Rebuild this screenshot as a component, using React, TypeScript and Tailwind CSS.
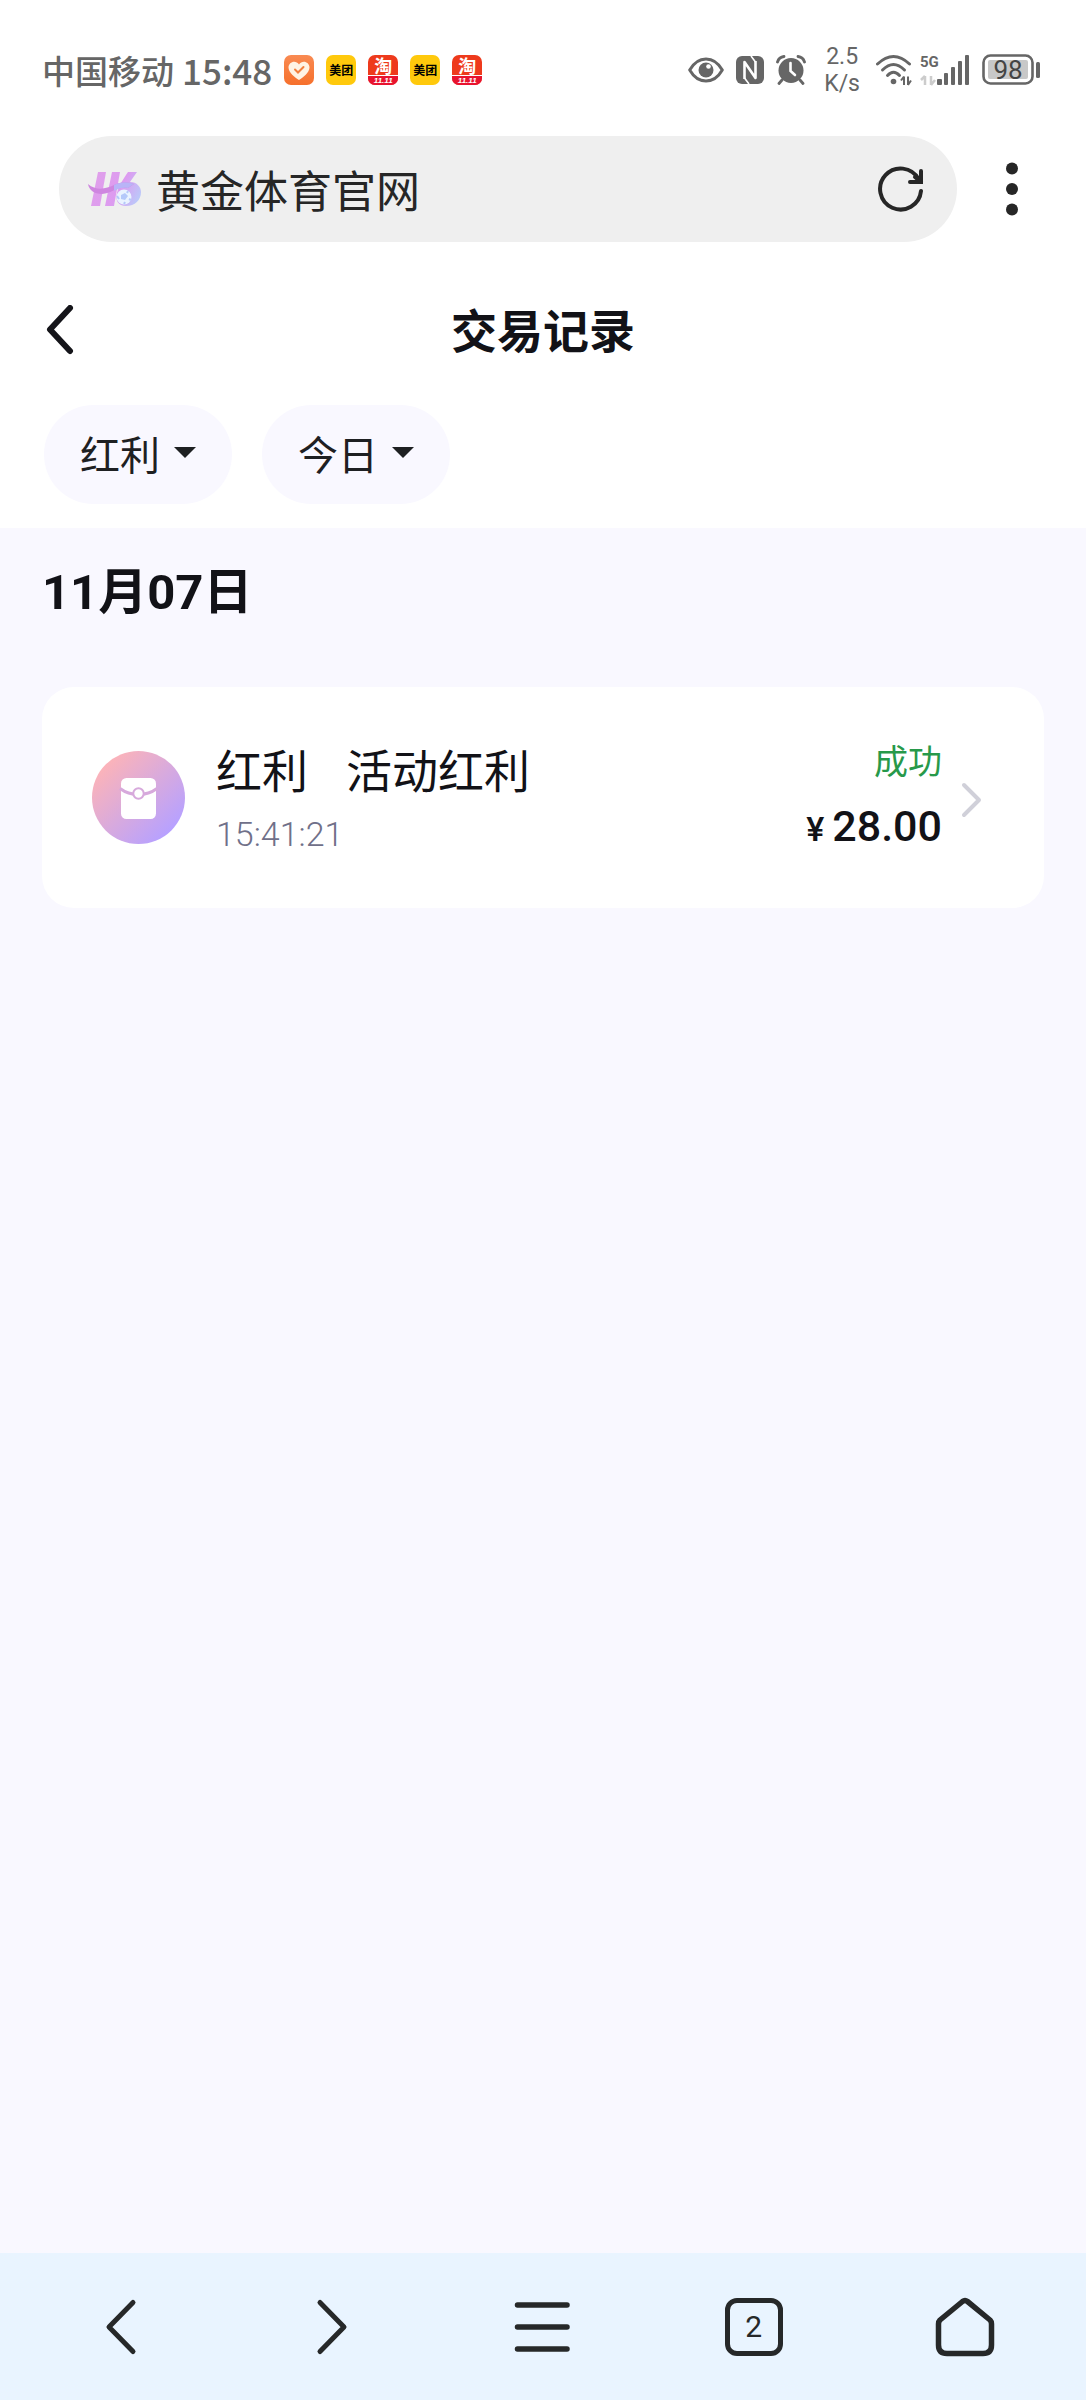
import type { ReactNode } from 'react';

function HeartAppIcon() {
  return (
    <svg width="30" height="30" viewBox="0 0 30 30" aria-hidden="true">
      <defs>
        <linearGradient id="heart-bg" x1="0" y1="0" x2="0" y2="1">
          <stop offset="0" stopColor="#f98a52" />
          <stop offset="1" stopColor="#f6702c" />
        </linearGradient>
      </defs>
      <rect width="30" height="30" rx="7" fill="url(#heart-bg)" />
      <path
        d="M15 25 C11 22.5 4.500 17.500 4.500 12.500 C4.500 6.500 12 4.500 15 9.500 C18 4.500 25.500 6.500 25.500 12.500 C25.500 17.500 19 22.500 15 25 Z"
        fill="#fff3e4"
      />
      <path
        d="M11 14.500 L14 17.500 L19.500 12"
        fill="none"
        stroke="#f3803f"
        strokeWidth="2"
        strokeLinecap="round"
      />
    </svg>
  );
}

function MeituanIcon() {
  return (
    <span className="flex size-[30px] items-center justify-center rounded-[7px] bg-[#ffc90c] text-[12px] leading-[18px] font-bold text-black">
      美团
    </span>
  );
}

function TaobaoIcon() {
  return (
    <span className="flex size-[30px] flex-col items-center rounded-[7px] bg-[#ee3a1c] text-white">
      <span className="text-[18px] leading-[20px] font-bold">淘</span>
      <span className="flex h-[10px] w-full items-center justify-center rounded-b-[7px] border-t border-white bg-[#e8132f] font-['Liberation_Sans',sans-serif] text-[8px] leading-[8px] font-bold italic">
        11.11
      </span>
    </span>
  );
}

function EyeIcon() {
  return (
    <svg width="36" height="26" viewBox="0 0 36 26" aria-hidden="true">
      <path
        d="M1.700 13 C6 5.500 12 2 18 2 C24 2 30 5.500 34.300 13 C30 20.500 24 24 18 24 C12 24 6 20.500 1.700 13 Z"
        fill="none"
        stroke="#666"
        strokeWidth="3"
        strokeLinejoin="round"
      />
      <circle cx="18" cy="13" r="7.500" fill="#666" />
      <circle cx="20.500" cy="9.500" r="2.300" fill="#fff" />
    </svg>
  );
}

function NfcIcon() {
  return (
    <svg width="28" height="28" viewBox="0 0 28 28" aria-hidden="true">
      <rect width="28" height="28" rx="6" fill="#666" />
      <path
        d="M8.500 23 V6 L19.500 22 V5"
        fill="none"
        stroke="#fff"
        strokeWidth="2.600"
        strokeLinejoin="round"
      />
      <path d="M15 0 L19.500 6 M8.500 22 L13 28" stroke="#fff" strokeWidth="1.600" />
    </svg>
  );
}

function AlarmIcon() {
  return (
    <svg width="30" height="30" viewBox="0 0 30 30" aria-hidden="true">
      <circle cx="15" cy="15.500" r="12.500" fill="#666" />
      <path
        d="M1.500 7 Q3 2 8 1.500 M28.500 7 Q27 2 22 1.500 M6 25 L3 28.500 M24 25 L27 28.500"
        fill="none"
        stroke="#666"
        strokeWidth="2.800"
        strokeLinecap="round"
      />
      <path
        d="M14.500 8 V16 L19 20"
        fill="none"
        stroke="#fff"
        strokeWidth="2.600"
        strokeLinecap="round"
      />
    </svg>
  );
}

function WifiIcon() {
  return (
    <svg width="36" height="32" viewBox="0 0 36 32" aria-hidden="true">
      <g fill="none" stroke="#666" strokeWidth="3" strokeLinecap="round">
        <path d="M1.500 10 Q17.500 -5 33.500 10" />
        <path d="M6.500 16 Q17.500 5 28.500 16" />
        <path d="M11.500 21.500 Q17.500 15 23.500 21.500" />
      </g>
      <circle cx="17.500" cy="27.500" r="2.800" fill="#666" />
      <path d="M28 22.500 V31 M28 22.500 L25 26.500 M32 31 V22.500 M32 31 L35 26.500" stroke="#666" strokeWidth="2" />
    </svg>
  );
}

function SignalIcon() {
  return (
    <svg width="50" height="32" viewBox="0 0 50 32" aria-hidden="true">
      <text x="0" y="13" fontSize="15" fontWeight="700" fontFamily="Roboto, sans-serif" fill="#666">
        5G
      </text>
      <path d="M5 22 V31 M5 22 L1 26 M11 31 V22 M11 31 L15 26" stroke="#ccc" strokeWidth="2.500" />
      <g fill="#666">
        <rect x="17" y="25" width="5" height="6" rx="1" />
        <rect x="24" y="19" width="4" height="12" rx="1" />
        <rect x="31" y="13" width="4" height="18" rx="1" />
        <rect x="38" y="7" width="4" height="24" rx="1" />
        <rect x="45" y="1" width="4" height="30" rx="1" />
      </g>
    </svg>
  );
}

function BatteryIcon() {
  return (
    <svg width="59" height="32" viewBox="0 0 59 32" aria-hidden="true">
      <rect x="1.500" y="1.500" width="49" height="28" rx="7" fill="none" stroke="#666" strokeWidth="2.600" />
      <rect x="6" y="6" width="40" height="19" rx="2" fill="#c8c8c8" />
      <rect x="54" y="8" width="4" height="16" rx="1.500" fill="#666" />
      <text
        x="26"
        y="25"
        textAnchor="middle"
        fontSize="26"
        fontWeight="400"
        fontFamily="Roboto, sans-serif"
        fill="#444"
      >
        98
      </text>
    </svg>
  );
}

function StatusBar() {
  return (
    <div className="flex h-[136px] items-center justify-between pt-1 pr-[45px] pl-[42px] text-[#666]">
      <div className="flex items-center gap-3">
        <div className="flex items-center gap-2 leading-[40px] font-medium">
          <span className="text-[33px]">中国移动</span>
          <span className="text-[35px]">15:48</span>
        </div>
        <HeartAppIcon />
        <MeituanIcon />
        <TaobaoIcon />
        <MeituanIcon />
        <TaobaoIcon />
      </div>
      <div className="flex items-center">
        <div className="mr-[18px] flex items-center gap-3">
          <EyeIcon />
          <NfcIcon />
          <AlarmIcon />
        </div>
        <div className="mr-4 text-center font-['Roboto',sans-serif] text-[23px] leading-[27px]">
          <p>2.5</p>
          <p>K/s</p>
        </div>
        <div className="flex items-center gap-2">
          <WifiIcon />
          <SignalIcon />
        </div>
        <div className="ml-3">
          <BatteryIcon />
        </div>
      </div>
    </div>
  );
}

function SiteLogo() {
  return (
    <svg width="54" height="36" viewBox="0 0 54 36" aria-hidden="true" className="shrink-0">
      <defs>
        <linearGradient id="site-logo" gradientUnits="userSpaceOnUse" x1="4" y1="4" x2="54" y2="30">
          <stop offset="0" stopColor="#e0a0ea" />
          <stop offset="0.550" stopColor="#dd9bf0" />
          <stop offset="1" stopColor="#b5d0fb" />
        </linearGradient>
      </defs>
      <g fill="url(#site-logo)">
        <path d="M10 1 H18 L12 35 H3 Z" />
        <path d="M24 1 H32 L26 35 H17 Z" />
        <path d="M40 1 H49 L42 11 C49 11 53 16 53 21 C53 29 47 35 38 35 C30 35 27 29 29 22 C31 14 36 7 40 1 Z" />
      </g>
      <path
        d="M0 13 C8 20 18 18 26 14 C34 10 40 11 46 13 L40 17 C30 15 24 22 14 23 C6 23 1 19 0 13 Z"
        fill="#cf86e0"
      />
      <path d="M26 14 C34 10 40 11 46 13 L40 17 C34 16 30 18 26 20 Z" fill="#b9b4f7" />
      <circle cx="36" cy="26" r="7.500" fill="#e9f3ff" />
      <path d="M33 24 L37 22 L40 25 L37 29 L33 28 Z" fill="#b4c9fa" />
      <path d="M29 25 L31 28 M36 33 L37 31 M43 29 L41 28 M40 20 L39 22" stroke="#b4c9fa" strokeWidth="2" />
    </svg>
  );
}

function AddressBar() {
  return (
    <div className="flex items-center pr-[59px] pl-[59px]">
      <form className="flex h-[106px] min-w-0 flex-1 items-center rounded-full bg-[#efefef] pr-8 pl-[29px]">
        <SiteLogo />
        <input
          type="text"
          aria-label="网址"
          defaultValue="黄金体育官网"
          className="ml-[14px] min-w-0 flex-1 bg-transparent text-[44px] leading-[60px] text-[#262626] outline-none"
        />
        <button type="button" aria-label="刷新">
          <svg width="48" height="48" viewBox="0 0 48 48" fill="none" stroke="#262626" strokeWidth="4" strokeLinecap="round">
            <path d="M44 26 A20.500 20.500 0 1 1 41.500 14" />
            <path d="M44 6 V17 H33" />
            <path d="M38 12 L44 17" />
          </svg>
        </button>
      </form>
      <button type="button" aria-label="更多" className="ml-[40px]">
        <svg width="30" height="54" viewBox="0 0 30 54" fill="#262626">
          <circle cx="15" cy="6.500" r="6" />
          <circle cx="15" cy="27" r="6" />
          <circle cx="15" cy="47.500" r="6" />
        </svg>
      </button>
    </div>
  );
}

function FilterSelect({ label, value }: { label: string; value: string }) {
  return (
    <div className="relative">
      <select
        aria-label={label}
        defaultValue={value}
        className="h-[99px] w-[188px] appearance-none rounded-full bg-[#f9f8ff] pb-1 pl-[36px] text-[40px] leading-[60px] text-[#1e2022] outline-none"
      >
        <option value={value}>{value}</option>
      </select>
      <svg
        width="22"
        height="11"
        viewBox="0 0 22 11"
        aria-hidden="true"
        className="pointer-events-none absolute top-[42px] right-9"
      >
        <path d="M0 0 H22 L11 11 Z" fill="#1e2022" />
      </svg>
    </div>
  );
}

function PageHeader() {
  return (
    <header>
      <div className="mt-3 grid h-[151px] grid-cols-3 items-center px-[43px]">
        <button type="button" aria-label="返回" className="justify-self-start">
          <svg width="32" height="50" viewBox="0 0 32 50" fill="none" stroke="#15151a" strokeWidth="6" strokeLinecap="round" strokeLinejoin="round">
            <path d="M27 3 L7 24.500 L27 46" />
          </svg>
        </button>
        <h1 className="pb-1 text-center text-[46px] leading-[60px] font-bold text-[#121217]">交易记录</h1>
      </div>
      <div className="flex gap-[30px] px-[44px] pb-6">
        <FilterSelect label="交易类型" value="红利" />
        <FilterSelect label="日期" value="今日" />
      </div>
    </header>
  );
}

function RedPacketIcon() {
  return (
    <svg width="93" height="93" viewBox="0 0 93 93" aria-hidden="true">
      <defs>
        <linearGradient id="packet-bg" x1="0.150" y1="0.150" x2="0.850" y2="0.850">
          <stop offset="0" stopColor="#fbb3ba" />
          <stop offset="1" stopColor="#b7a1ff" />
        </linearGradient>
      </defs>
      <circle cx="46.500" cy="46.500" r="46.500" fill="url(#packet-bg)" />
      <rect x="29" y="27" width="35" height="41" rx="5.500" fill="#fff" />
      <path d="M28 37.500 Q36 43.500 46.500 43.500 Q57 43.500 65 37.500" fill="none" stroke="#d7a9dc" strokeWidth="3" />
      <circle cx="46.500" cy="42.500" r="5.200" fill="#fff" stroke="#d7a9dc" strokeWidth="2" />
    </svg>
  );
}

function RecordCard() {
  return (
    <button
      type="button"
      className="flex h-[221px] w-full items-center rounded-[32px] bg-white pr-[60px] pl-[50px] text-left text-[#121217]"
    >
      <RedPacketIcon />
      <span className="ml-[31px] flex flex-col gap-4 pb-1">
        <span className="flex gap-[38px] text-[46px] leading-[60px]">
          <span>红利</span>
          <span>活动红利</span>
        </span>
        <span className="font-['Roboto',sans-serif] text-[34px] leading-[40px] font-light text-[#707089]">
          15:41:21
        </span>
      </span>
      <span className="ml-auto flex flex-col items-end gap-4">
        <span className="text-[34px] leading-[44px] text-[#27994a]">成功</span>
        <span className="flex items-baseline gap-2 font-['Roboto',sans-serif] leading-[56px] font-medium">
          <span className="text-[34px]">¥</span>
          <span className="text-[43px]">28.00</span>
        </span>
      </span>
      <svg width="24" height="38" viewBox="0 0 24 38" aria-hidden="true" className="mt-1 ml-[18px]">
        <path
          d="M4 4 L19 19 L4 34"
          fill="none"
          stroke="#d0d0d9"
          strokeWidth="4"
          strokeLinecap="round"
          strokeLinejoin="round"
        />
      </svg>
    </button>
  );
}

function NavButton({ label, children }: { label: string; children: ReactNode }) {
  return (
    <button type="button" aria-label={label} className="flex h-full items-center justify-center">
      {children}
    </button>
  );
}

function BottomNav() {
  return (
    <nav className="grid h-[147px] grid-cols-5 bg-[#e9f4ff] px-4">
      <NavButton label="后退">
        <svg width="60" height="60" viewBox="0 0 60 60" fill="none" stroke="#262829" strokeWidth="5" strokeLinecap="round" strokeLinejoin="round">
          <path d="M42 5.500 L18 30 L42 54.500" />
        </svg>
      </NavButton>
      <NavButton label="前进">
        <svg width="60" height="60" viewBox="0 0 60 60" fill="none" stroke="#262829" strokeWidth="5" strokeLinecap="round" strokeLinejoin="round">
          <path d="M18 5.500 L42 30 L18 54.500" />
        </svg>
      </NavButton>
      <NavButton label="菜单">
        <svg width="60" height="60" viewBox="0 0 60 60" stroke="#262829" strokeWidth="5.500" strokeLinecap="round">
          <path d="M4.500 8 H54 M4.500 30 H54 M4.500 52 H54" />
        </svg>
      </NavButton>
      <NavButton label="标签页">
        <span className="flex size-[58px] items-center justify-center rounded-[12px] border-[5px] border-[#262829] font-['Roboto',sans-serif] text-[30px] leading-[36px] text-[#262829]">
          2
        </span>
      </NavButton>
      <NavButton label="主页">
        <svg width="60" height="60" viewBox="0 0 60 60" fill="none" stroke="#262829" strokeWidth="5.500" strokeLinejoin="round">
          <path d="M27.500 4.500 Q30 2.500 32.500 4.500 L55 23 Q56.500 24.500 56.500 27 V48 Q56.500 56.500 48 56.500 H12 Q3.500 56.500 3.500 48 V27 Q3.500 24.500 5 23 Z" />
        </svg>
      </NavButton>
    </nav>
  );
}

export default function App() {
  return (
    <div className="flex min-h-screen flex-col bg-white font-['Noto_Sans_CJK_SC',sans-serif]">
      <StatusBar />
      <AddressBar />
      <PageHeader />
      <main className="flex-1 bg-[#f9f8ff] px-[42px] pt-8">
        <h2 className="mb-[61px] font-['Roboto','Noto_Sans_CJK_SC',sans-serif] text-[49px] leading-[66px] font-bold text-[#121217]">
          11月07日
        </h2>
        <RecordCard />
      </main>
      <BottomNav />
    </div>
  );
}
